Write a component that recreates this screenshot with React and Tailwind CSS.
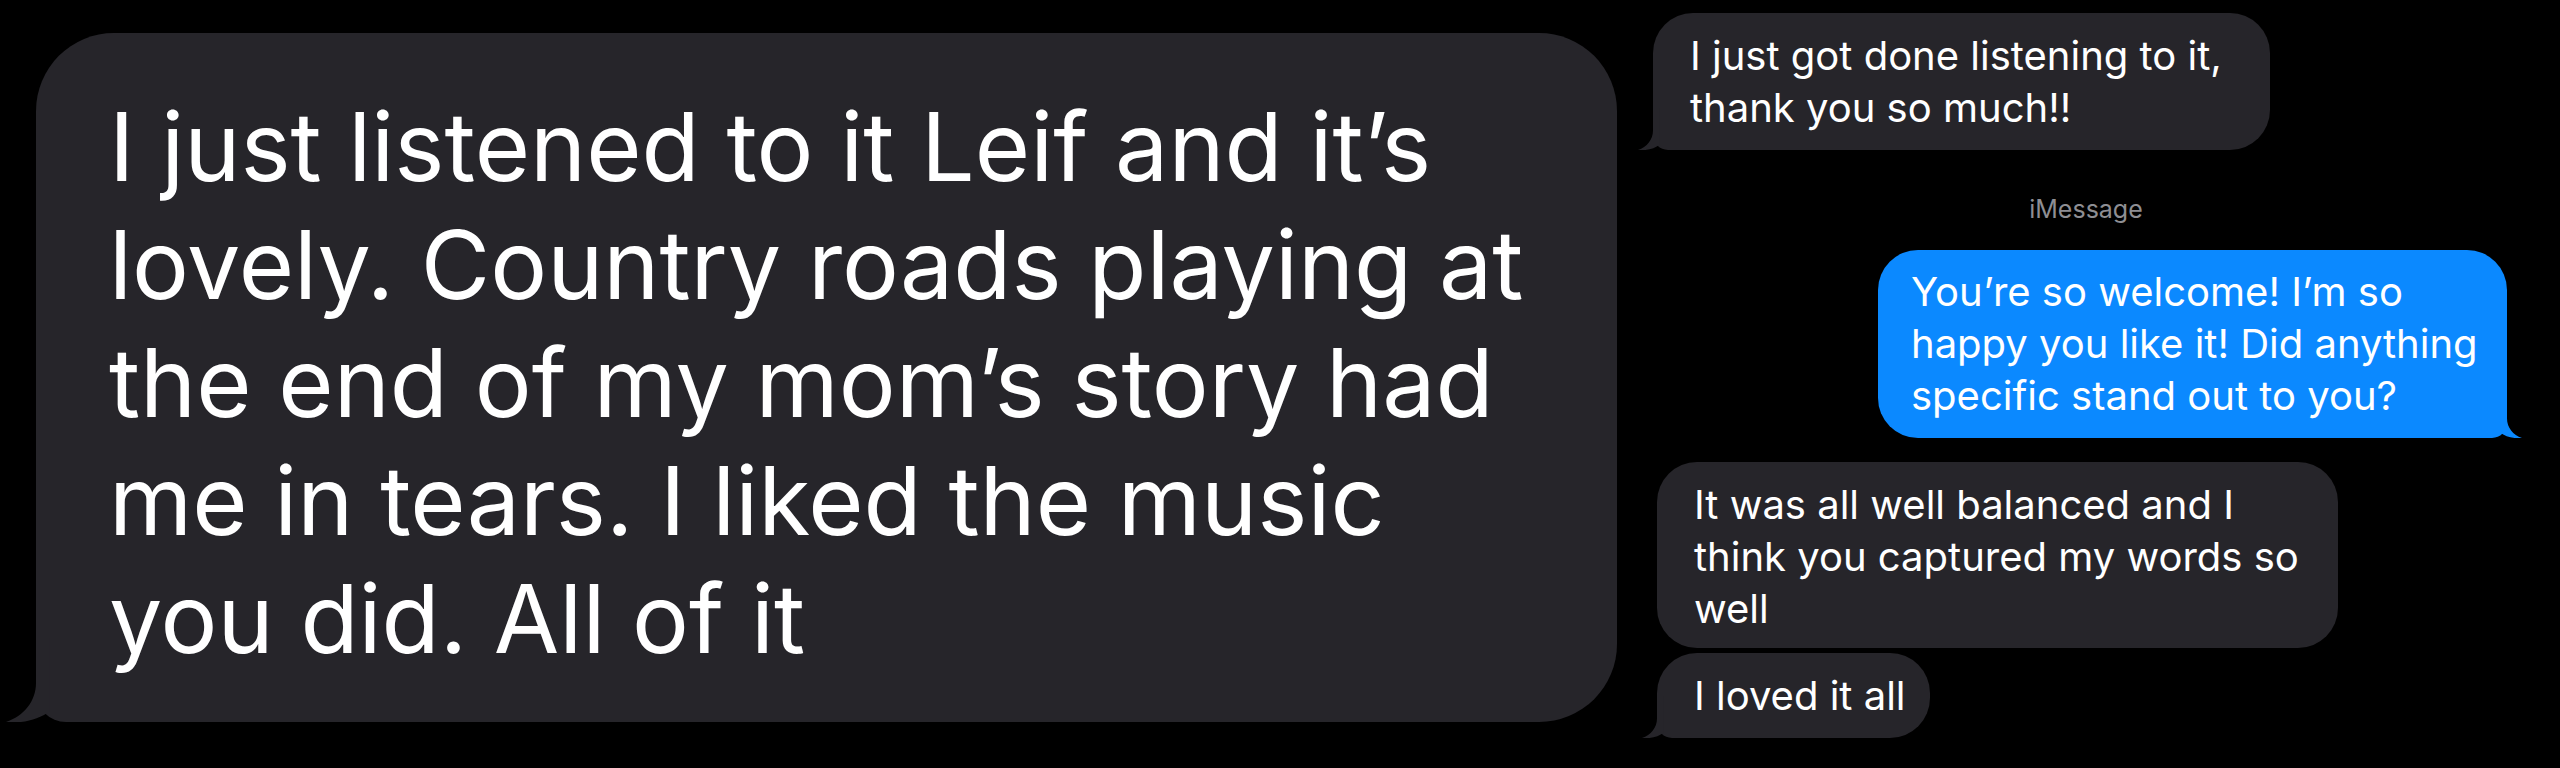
import React from 'react'

const GRAY = '#26252a'
const BLUE = '#0b89ff'

// horn-shaped bubble tail, drawn in 22x28 units, bubble edge sits at x=10
function Tail({ side = 'left', unit = 1.5, color = GRAY }) {
  const w = 22 * unit
  const h = 28 * unit
  const pos = side === 'left'
    ? { left: -10 * unit, bottom: 0 }
    : { right: -10 * unit, bottom: 0 }
  return (
    <svg width={w} height={h} viewBox="0 0 22 28" className="absolute" style={pos}>
      <g transform={side === 'left' ? undefined : 'translate(22,0) scale(-1,1)'}>
        <path d="M10,0 L10,15 C10,21 6,26 0,28 C6,28.6 11,27 14.5,24.5 L14.5,0 Z" fill={color} />
      </g>
    </svg>
  )
}

function Lines({ lines }) {
  return lines.map((l, i) => <div key={i} className="whitespace-nowrap">{l}</div>)
}

function Received({ lines, className = '', tail = false }) {
  return (
    <div className={`relative rounded-[40px] bg-[#26252a] pl-[37px] pr-6 py-[17px] text-[40px] leading-[52px] text-white ${tail ? 'rounded-bl-[15px]' : ''} ${className}`}>
      <Lines lines={lines} />
      {tail && <Tail side="left" unit={1.5} color={GRAY} />}
    </div>
  )
}

export default function App() {
  return (
    <div className="w-[2560px] h-[768px] bg-black flex items-start overflow-hidden" style={{ fontFamily: 'Inter, "Liberation Sans", sans-serif' }}>
      {/* big message */}
      <div className="relative ml-[36px] mt-[33px] w-[1581px] h-[689px] rounded-[78px] rounded-bl-[30px] bg-[#26252a] pl-[73px] pt-[55px] text-[95px] leading-[118px] text-white">
        <Lines lines={[
          'I just listened to it Leif and it\u2019s',
          'lovely. Country roads playing at',
          'the end of my mom\u2019s story had',
          'me in tears. I liked the music',
          'you did. All of it',
        ]} />
        <Tail side="left" unit={3} color={GRAY} />
      </div>

      {/* conversation column */}
      <div className="ml-[36px] w-[878px] flex flex-col">
        <Received
          className="mt-[13px] self-start w-[617px] h-[137px]"
          tail
          lines={['I just got done listening to it,', 'thank you so much!!']}
        />

        <div className="mt-[44px] pr-[12px] text-center text-[25px] leading-[30px] text-[#8e8e93]">iMessage</div>

        <div className="relative mt-[26px] self-end mr-[24px] w-[629px] h-[188px] rounded-[40px] rounded-br-[15px] bg-[#0b89ff] pl-[33px] py-[16px] text-[40px] leading-[52px] text-white">
          <Lines lines={[
            'You\u2019re so welcome! I\u2019m so',
            'happy you like it! Did anything',
            'specific stand out to you?',
          ]} />
          <Tail side="right" unit={1.5} color={BLUE} />
        </div>

        <Received
          className="mt-[24px] self-start ml-[4px] w-[681px] h-[186px]"
          lines={['It was all well balanced and I', 'think you captured my words so', 'well']}
        />
        <Received
          className="mt-[5px] self-start ml-[4px] w-[273px] h-[85px]"
          tail
          lines={['I loved it all']}
        />
      </div>
    </div>
  )
}
